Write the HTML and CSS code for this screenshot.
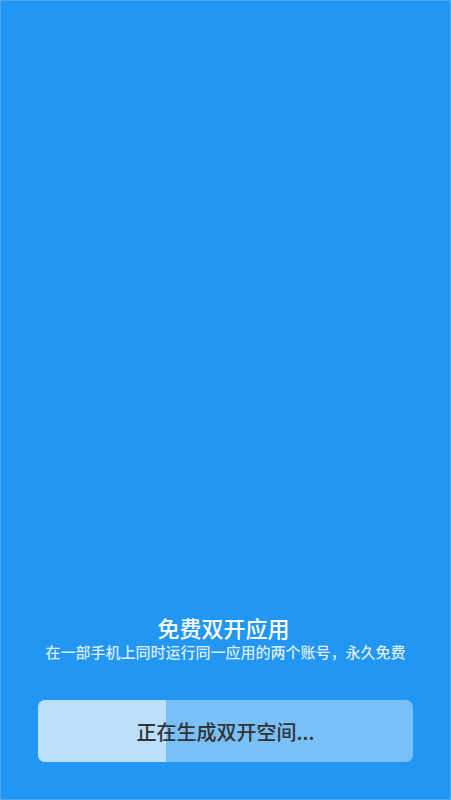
FILE: index.html
```html
<!DOCTYPE html>
<html lang="zh-CN">
<head>
<meta charset="utf-8">
<title>免费双开应用</title>
<link rel="stylesheet" href="styles.css">
</head>
<body>
<main class="screen">
  <section class="intro">
    <h1 class="title">免费双开应用</h1>
    <p class="subtitle">在一部手机上同时运行同一应用的两个账号，永久免费</p>
  </section>
  <div class="progress">
    <div class="progress-fill" style="width:34%"></div>
    <span class="progress-label">正在生成双开空间...</span>
  </div>
</main>
</body>
</html>
```

FILE: styles.css
```css
html, body {
  margin: 0;
  padding: 0;
  height: 100%;
}

body {
  background: #2196f3;
  font-family: "Noto Sans CJK SC", "Noto Sans", sans-serif;
}

.screen {
  box-sizing: border-box;
  height: 800px;
  display: flex;
  flex-direction: column;
  justify-content: flex-end;
  align-items: center;
  padding: 0 38px 38px;
  background: #2196f3;
  box-shadow: inset 0 0 0 1px #48a9f6;
}

.intro {
  display: flex;
  flex-direction: column;
  align-items: center;
  margin-bottom: 38px;
}

.title {
  margin: 0 0 0 -4px;
  font-size: 22px;
  line-height: 30px;
  font-weight: 500;
  color: #ffffff;
  letter-spacing: 0;
}

.subtitle {
  margin: 0;
  font-size: 15px;
  line-height: 20px;
  font-weight: 500;
  color: rgba(255, 255, 255, 0.85);
  white-space: nowrap;
}

.progress {
  position: relative;
  width: 375px;
  height: 62px;
  border-radius: 7px;
  overflow: hidden;
  background: #7ac0f8;
  display: flex;
  align-items: center;
  justify-content: center;
}

.progress-fill {
  position: absolute;
  left: 0;
  top: 0;
  bottom: 0;
  background: #bcdffb;
}

.progress-label {
  position: relative;
  font-size: 20px;
  font-weight: 500;
  color: #333333;
  letter-spacing: 0;
}
```
